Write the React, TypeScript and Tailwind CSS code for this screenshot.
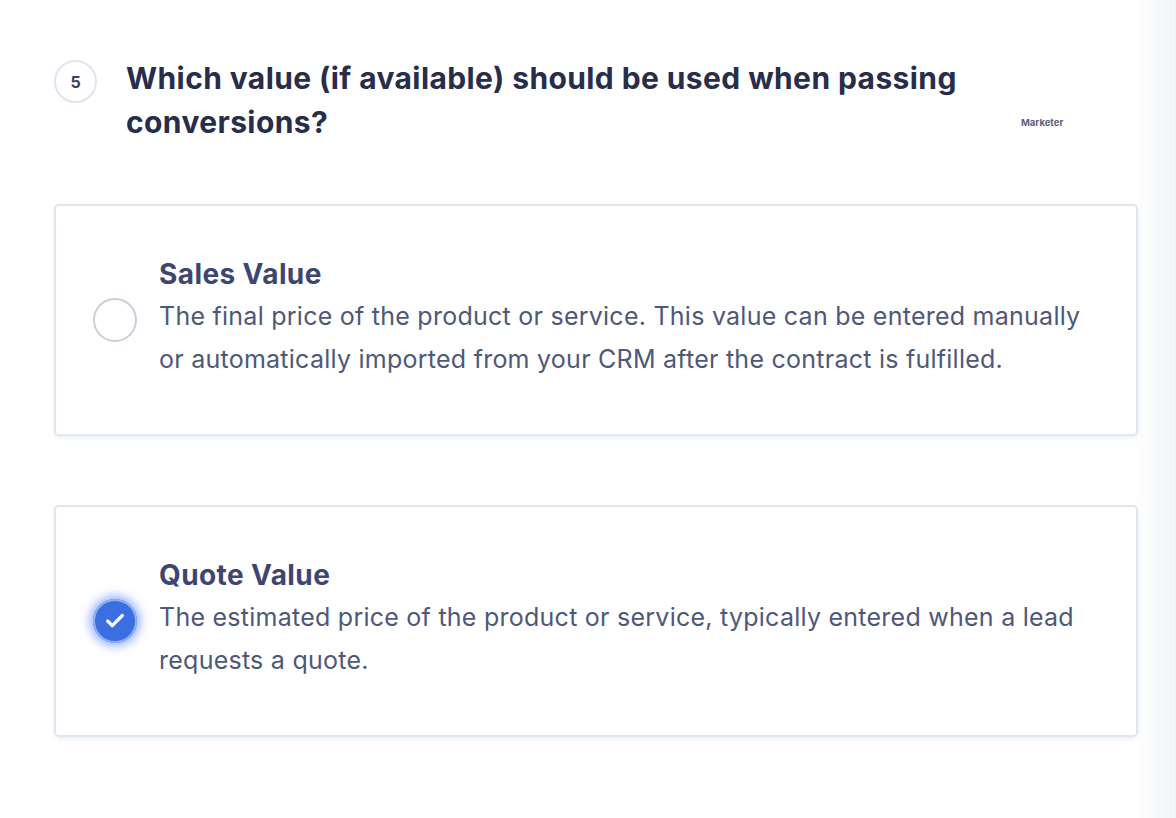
import { Check } from 'lucide-react';

const OPTIONS = [
  {
    id: 'sales',
    title: 'Sales Value',
    text: 'The final price of the product or service. This value can be entered manually or automatically imported from your CRM after the contract is fulfilled.',
    checked: false,
  },
  {
    id: 'quote',
    title: 'Quote Value',
    text: 'The estimated price of the product or service, typically entered when a lead requests a quote.',
    checked: true,
  },
];

function Radio({ checked }: { checked: boolean }) {
  if (checked) {
    return (
      <span className="flex size-[44px] shrink-0 items-center justify-center rounded-full bg-[#3b6fe0] ring-2 ring-inset ring-[#8fb0f3] shadow-[0_0_9px_4px_rgba(80,120,255,0.5)]">
        <Check className="size-[22px] text-white" strokeWidth={3.5} />
      </span>
    );
  }
  return <span className="size-[44px] shrink-0 rounded-full border-2 border-[#c5cfda] bg-white" />;
}

export default function App() {
  return (
    <div
      className="relative h-[818px] w-[1176px] overflow-hidden bg-white text-[#272d4a]"
      style={{ fontFamily: 'Inter, "Noto Sans", sans-serif' }}
    >
      <div className="pointer-events-none absolute inset-y-0 right-0 w-[40px] bg-gradient-to-r from-transparent to-[#f1f3f6]" />

      <div className="relative pl-[54px] pr-[38px] pt-[56px]">
        <div className="flex items-start">
          <span className="mt-[4px] flex size-[43px] shrink-0 items-center justify-center rounded-full border-2 border-[#e0e4f0] text-[16px] font-bold text-[#3a4060]">
            5
          </span>
          <h1 className="ml-[29px] w-[888px] text-[30px] font-bold leading-[44px] tracking-[0.4px] text-[#272d4a]">
            Which value (if available) should be used when passing conversions?
          </h1>
          <span className="ml-[7px] mt-[60px] text-[9.5px] font-bold text-[#5b6080]">Marketer</span>
        </div>

        <div className="mt-[60px] flex flex-col gap-[69px]">
          {OPTIONS.map((o) => (
            <label
              key={o.id}
              className="flex h-[232px] items-center gap-[22px] rounded-[5px] border-2 border-[#dfe6f0] bg-white pl-[37px] pr-[40px] shadow-[0_2px_4px_rgba(180,195,215,0.25)]"
            >
              <Radio checked={o.checked} />
              <div>
                <div className="mb-[7px] text-[28px] font-bold leading-[28px] tracking-[0.4px] text-[#3d4670]">
                  {o.title}
                </div>
                <p className="text-[25px] leading-[43px] tracking-[0.25px] text-[#4e5878]">{o.text}</p>
              </div>
            </label>
          ))}
        </div>
      </div>
    </div>
  );
}
